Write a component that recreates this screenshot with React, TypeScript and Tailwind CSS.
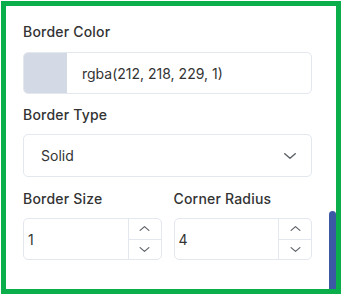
import React from "react";

const Chevron = ({ dir, size = 14 }: { dir: "up" | "down"; size?: number }) => (
  <svg width={size} height={size} viewBox="0 0 24 24" fill="none" stroke="#5f6368" strokeWidth={2} strokeLinecap="round" strokeLinejoin="round">
    {dir === "down" ? <path d="M5 9l7 6 7-6" /> : <path d="M5 15l7-6 7 6" />}
  </svg>
);

const NumberInput = ({ value }: { value: string }) => (
  <div className="flex h-[42px] rounded-[5px] border border-[#e3e7ee] bg-white">
    <div className="flex flex-1 items-center pl-[4px] text-[14px] text-[#333]">{value}</div>
    <div className="flex w-[33px] flex-col border-l border-[#e3e7ee]">
      <div className="flex flex-1 items-center justify-center border-b border-[#e3e7ee]">
        <Chevron dir="up" size={15} />
      </div>
      <div className="flex flex-1 items-center justify-center">
        <Chevron dir="down" size={15} />
      </div>
    </div>
  </div>
);

export default function App() {
  return (
    <div className="h-[295px] w-[342px] bg-white p-[1px]" style={{ fontFamily: "Inter, 'Noto Sans', sans-serif" }}>
      <div className="relative h-[293px] w-[340px] border-[5px] border-[#0aaf4b] bg-white">
        <div className="pl-[17px] pr-[24px] pt-[16px]">
          <div className="h-[20px] text-[14px] font-medium leading-[20px] tracking-[0.2px] text-[#333]">Border Color</div>
          <div className="mt-[10px] flex h-[42px] overflow-hidden rounded-[5px] border border-[#e3e7ee]">
            <div className="w-[43px] bg-[rgb(212,218,229)]" />
            <div className="flex items-center pl-[15px] text-[14px] text-[#333]">rgba(212, 218, 229, 1)</div>
          </div>
          <div className="mt-[11px] h-[20px] text-[14px] font-medium leading-[20px] tracking-[0.2px] text-[#333]">Border Type</div>
          <div className="mt-[9px] flex h-[43px] items-center justify-between rounded-[5px] border border-[#e3e7ee] pl-[17px] pr-[12px]">
            <span className="text-[14px] text-[#333]">Solid</span>
            <Chevron dir="down" size={18} />
          </div>
          <div className="mt-[12px] grid grid-cols-2 gap-x-[12px]">
            <div>
              <div className="h-[20px] text-[14px] font-medium leading-[20px] tracking-[0.2px] text-[#333]">Border Size</div>
              <div className="mt-[9px]">
                <NumberInput value="1" />
              </div>
            </div>
            <div>
              <div className="h-[20px] text-[14px] font-medium leading-[20px] tracking-[0.2px] text-[#333]">Corner Radius</div>
              <div className="mt-[9px]">
                <NumberInput value="4" />
              </div>
            </div>
          </div>
        </div>
        <div className="absolute bottom-0 right-0 h-[78px] w-[7px] rounded-t-[4px] bg-[#3c59a6]" />
      </div>
    </div>
  );
}
